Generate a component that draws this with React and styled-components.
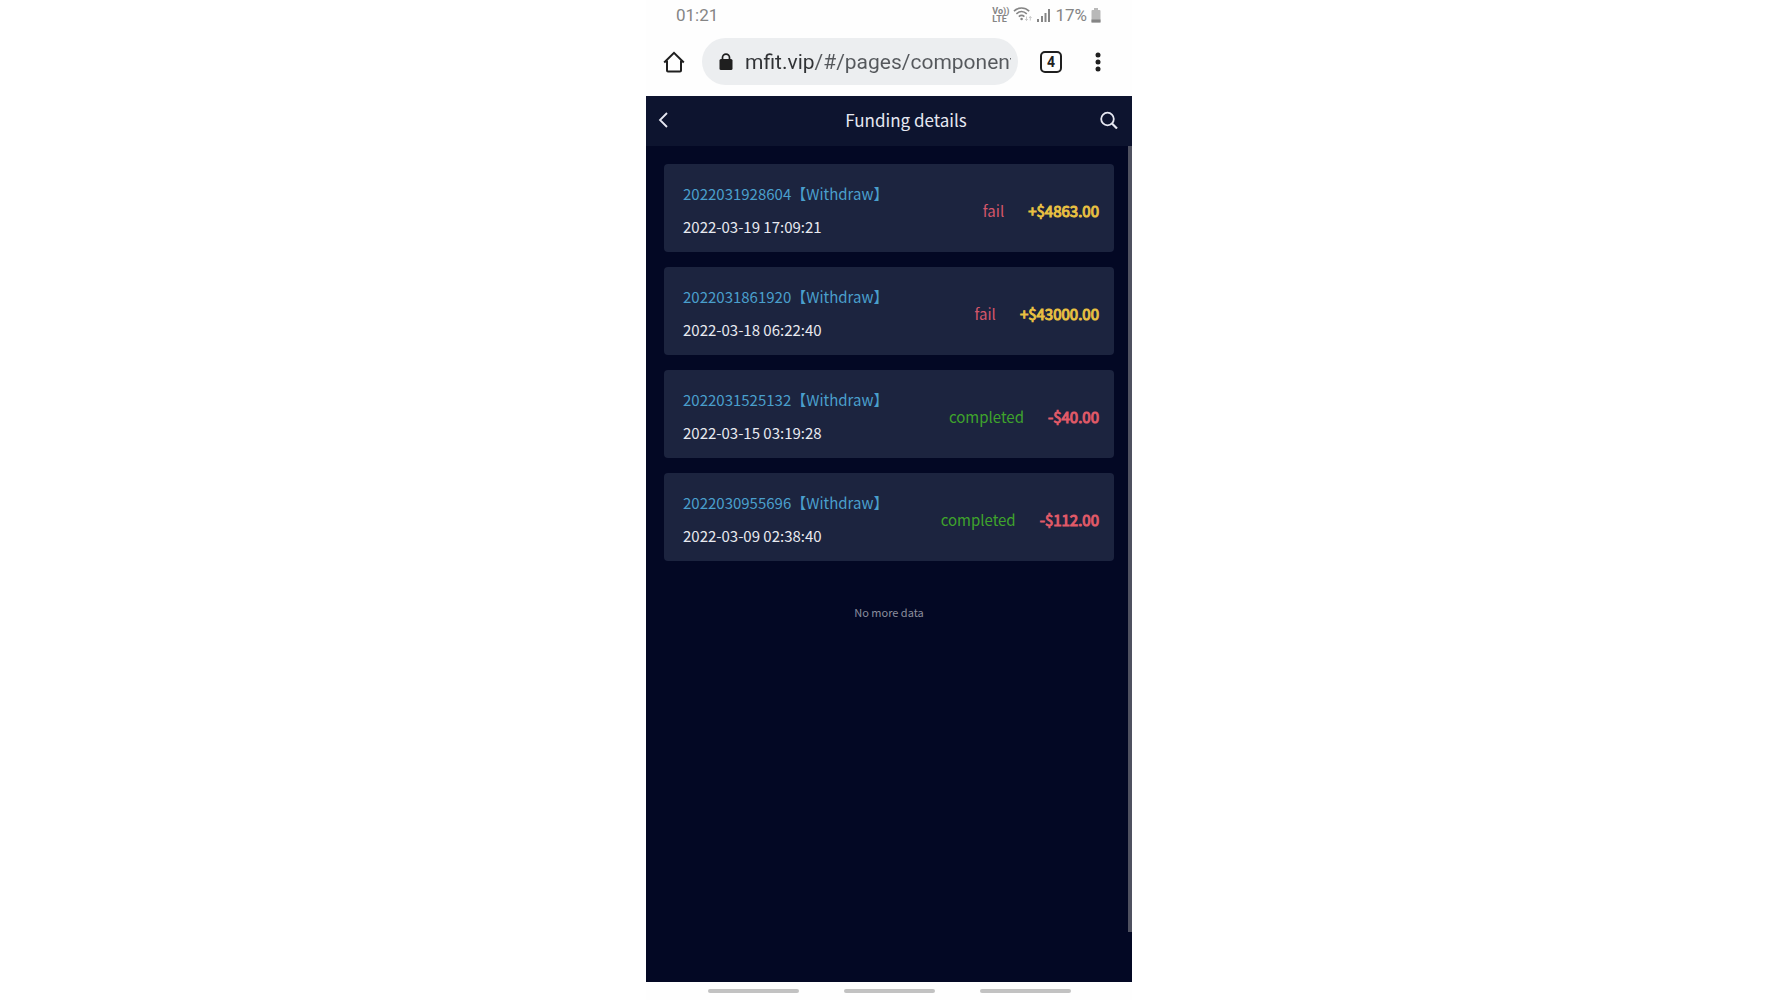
import React from 'react'
import styled, { createGlobalStyle } from 'styled-components'

const records = [
  { id: '2022031928604', type: 'Withdraw', time: '2022-03-19 17:09:21', status: 'fail', amount: '+$4863.00' },
  { id: '2022031861920', type: 'Withdraw', time: '2022-03-18 06:22:40', status: 'fail', amount: '+$43000.00' },
  { id: '2022031525132', type: 'Withdraw', time: '2022-03-15 03:19:28', status: 'completed', amount: '-$40.00' },
  { id: '2022030955696', type: 'Withdraw', time: '2022-03-09 02:38:40', status: 'completed', amount: '-$112.00' },
]

function StatusIcons() {
  return (
    <StatusRight>
      <Volte>
        <span>Vo))</span>
        <span>LTE</span>
      </Volte>
      <svg width="20" height="16" viewBox="0 0 20 16" fill="none" stroke="#858585" strokeWidth="1.6">
        <path d="M1 4.200C5.400 0 11.800 0 16.200 4.200" />
        <path d="M3.400 6.900C6.700 3.900 10.500 3.900 13.800 6.900" />
        <path d="M5.800 9.600C7.700 8 9.500 8 11.400 9.600" />
        <circle cx="8.600" cy="12" r="1.300" fill="#858585" stroke="none" />
        <path d="M13.500 9.500v4M12.200 12l1.300 1.500 1.300-1.500M17.300 13.500v-4M16 11l1.300-1.500 1.300 1.500" stroke="#c4c4c4" strokeWidth="0.9" />
      </svg>
      <svg width="14" height="15" viewBox="0 0 14 15" fill="#858585">
        <rect x="0" y="11" width="2" height="3" />
        <rect x="4" y="8" width="2" height="6" />
        <rect x="7.500" y="5" width="2" height="9" />
        <rect x="11" y="1" width="2" height="13" />
      </svg>
      <span>17%</span>
      <svg width="10" height="15" viewBox="0 0 10 15">
        <path d="M3 0h4v2h1.500q1 0 1 1v11q0 .5-.5.5H1q-.5 0-.5-.5V3q0-1 1-1H3z" fill="#b9b9b9" />
        <path d="M.5 11.500h9V14q0 .5-.5.5H1q-.5 0-.5-.5z" fill="#858585" />
      </svg>
    </StatusRight>
  )
}

function Record({ record }) {
  return (
    <Card>
      <Info>
        <RecordId>{record.id}【{record.type}】</RecordId>
        <RecordTime>{record.time}</RecordTime>
      </Info>
      <Status $done={record.status === 'completed'}>{record.status}</Status>
      <Amount $plus={record.amount.startsWith('+')}>{record.amount}</Amount>
    </Card>
  )
}

function App() {
  return (
    <Phone>
      <GlobalStyle />
      <StatusBar>
        <span>01:21</span>
        <StatusIcons />
      </StatusBar>
      <Toolbar>
        <IconButton aria-label="Home">
          <svg width="22" height="22" viewBox="0 0 22 22" fill="none" stroke="#1f1f1f" strokeWidth="2">
            <path d="M1.200 11.500L11 1.800l9.800 9.700" />
            <path d="M4 9.500v10q0 1 1 1h12q1 0 1-1v-10" />
          </svg>
        </IconButton>
        <Omnibox>
          <svg width="14" height="18" viewBox="0 0 14 18">
            <path d="M3.500 7V4.600a3.500 3.500 0 0 1 7 0V7" fill="none" stroke="#1f1f1f" strokeWidth="1.700" />
            <rect x="0.500" y="6" width="13" height="11" rx="1.500" fill="#1f1f1f" />
          </svg>
          <Url aria-label="Address" defaultValue="mfit.vip/#/pages/component/" />
        </Omnibox>
        <IconButton aria-label="Tabs">
          <TabCount>4</TabCount>
        </IconButton>
        <IconButton aria-label="More">
          <svg width="6" height="20" viewBox="0 0 6 20" fill="#1f1f1f">
            <circle cx="3" cy="3" r="2.500" />
            <circle cx="3" cy="10" r="2.500" />
            <circle cx="3" cy="17" r="2.500" />
          </svg>
        </IconButton>
      </Toolbar>
      <Header>
        <IconButton aria-label="Back">
          <svg width="10" height="16" viewBox="0 0 10 16" fill="none" stroke="#e6e8f2" strokeWidth="1.800">
            <path d="M9 1L2 8l7 7" />
          </svg>
        </IconButton>
        <h1>Funding details</h1>
        <IconButton aria-label="Search">
          <svg width="18" height="18" viewBox="0 0 18 18" fill="none" stroke="#e6e8f2" strokeWidth="1.800">
            <circle cx="7.500" cy="8" r="6.300" />
            <path d="M12 12.500l5 5" strokeWidth="2.200" />
          </svg>
        </IconButton>
      </Header>
      <Page>
        <List>
          {records.map((record) => (
            <Record key={record.id} record={record} />
          ))}
        </List>
        <NoMore>No more data</NoMore>
        <ScrollThumb />
      </Page>
      <NavBar>
        <NavHint />
        <NavHint />
        <NavHint />
      </NavBar>
    </Phone>
  )
}

export default App

const GlobalStyle = createGlobalStyle`
    * {
        box-sizing: border-box;
    }
    body {
        margin: 0;
        background: #fff;
    }
    svg {
        display: block;
        flex: none;
    }
`
const Phone = styled.div`
    max-width: 486px;
    min-height: 100vh;
    margin: 0 auto;
    display: flex;
    flex-direction: column;
    background: #fefefe;
    font-family: "Noto Sans CJK SC", sans-serif;
`
const StatusBar = styled.div`
    height: 30px;
    padding: 0 31px 0 30px;
    display: flex;
    align-items: center;
    justify-content: space-between;
    color: #858585;
    font-family: Roboto, sans-serif;
    font-size: 17px;
`
const StatusRight = styled.div`
    display: flex;
    align-items: center;
    gap: 4px;
`
const Volte = styled.div`
    display: flex;
    flex-direction: column;
    font-size: 9px;
    font-weight: 700;
    line-height: 8px;
`
const Toolbar = styled.div`
    height: 66px;
    padding: 0 31px 3px 17px;
    display: flex;
    align-items: center;
`
const IconButton = styled.button`
    display: flex;
    flex: none;
    padding: 0;
    border: 0;
    background: none;
    cursor: pointer;
`
const Omnibox = styled.div`
    flex: 1;
    min-width: 0;
    height: 47px;
    margin: 0 22px 0 17px;
    padding: 1px 7px 0 17px;
    display: flex;
    align-items: center;
    gap: 12px;
    border-radius: 24px;
    background: #eceef0;
`
const Url = styled.input`
    flex: 1;
    min-width: 0;
    padding: 0;
    border: 0;
    outline: 0;
    /* the host is darker than the path */
    background: linear-gradient(90deg, #303235 70px, #55585c 70px);
    background-clip: text;
    color: transparent;
    font-family: Roboto, sans-serif;
    font-size: 21px;
    line-height: 28px;
`
const TabCount = styled.span`
    width: 22px;
    height: 22px;
    margin-right: 33px;
    border: 2px solid #1f1f1f;
    border-radius: 5px;
    color: #1f1f1f;
    font-family: Roboto, sans-serif;
    font-size: 14px;
    font-weight: 700;
    line-height: 18px;
    text-align: center;
`
const Header = styled.header`
    height: 50px;
    padding: 0 14px 3px 12px;
    display: flex;
    align-items: center;
    justify-content: space-between;
    background: #0d142f;
    color: #e6e8f2;

    h1 {
        margin: 0 0 0 44px;
        font-size: 17px;
        font-weight: 400;
        line-height: 26px;
    }
`
const Page = styled.main`
    position: relative;
    flex: 1;
    padding: 18px;
    background: #030824;
`
const List = styled.ul`
    margin: 0;
    padding: 0;
    display: flex;
    flex-direction: column;
    gap: 15px;
    list-style: none;
`
const Card = styled.li`
    padding: 18px 15px 14px 19px;
    display: flex;
    align-items: center;
    border-radius: 4px;
    background: #1c243f;
    font-size: 15px;
    line-height: 23px;
`
const Info = styled.div`
    flex: 1;
    display: flex;
    flex-direction: column;
    gap: 10px;
`
const RecordId = styled.div`
    color: #4a9fcc;
`
const RecordTime = styled.div`
    color: #e8eaf0;
`
const Status = styled.div`
    color: ${(props) => (props.$done ? '#3fa32c' : '#d4566a')};
`
const Amount = styled.div`
    margin-left: 24px;
    color: ${(props) => (props.$plus ? '#e8c042' : '#e05a68')};
    -webkit-text-stroke: 1px;
`
const NoMore = styled.p`
    margin: 42px 0 0;
    color: #8b8e9d;
    font-size: 11px;
    line-height: 18px;
    text-align: center;
`
const ScrollThumb = styled.div`
    position: absolute;
    top: 0;
    right: 0;
    width: 4px;
    height: 94%;
    background: #4f5160;
`
const NavBar = styled.div`
    height: 18px;
    display: flex;
    align-items: center;
    justify-content: center;
    gap: 45px;
`
const NavHint = styled.div`
    width: 91px;
    height: 4px;
    border-radius: 2px;
    background: #c2c2c2;
`
